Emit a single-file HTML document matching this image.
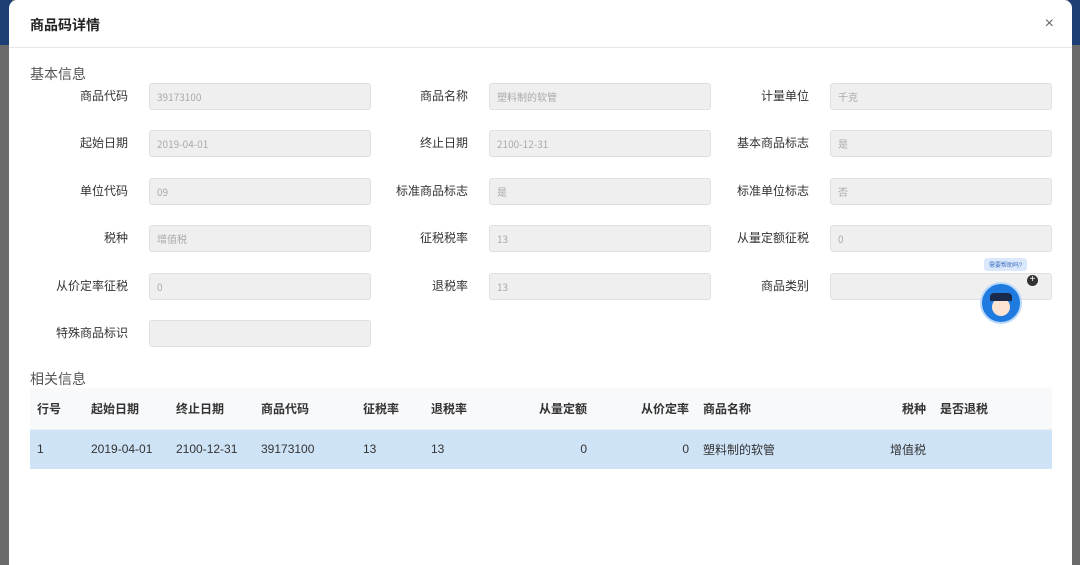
<!DOCTYPE html>
<html><head><meta charset="utf-8"><style>
*{margin:0;padding:0;box-sizing:border-box}
body{width:1080px;height:565px;overflow:hidden;background:#6b6b6b;font-family:"Liberation Sans","Noto Sans CJK SC",sans-serif;position:relative}
.lb{position:absolute;left:0;top:0;width:12px;height:45px;background:#1d3f73}
.rb{position:absolute;right:0;top:0;width:12px;height:45px;background:#1d3f73}
.modal{position:absolute;left:9px;top:0;width:1063px;height:565px;background:#fff;border-radius:8px 8px 0 0}
.hd{height:48px;border-bottom:1px solid #e6e6e6;position:relative}
.hd span{position:absolute;left:21px;top:15px;font-size:14px;color:#222;font-weight:bold}
.x{position:absolute;right:18px;top:15px;font-size:16px;color:#666}
.sec{position:absolute;font-size:14px;color:#555;left:21px}
.lab{position:absolute;font-size:12px;color:#333;text-align:right;width:120px;line-height:27px}
.in{position:absolute;width:222px;height:27px;background:#efefef;border:1px solid #e0e0e0;border-radius:3px;font-size:10px;color:#aaa;padding-left:7px;line-height:25px;font-family:"Noto Sans CJK SC",sans-serif}
table{position:absolute;left:21px;top:388px;width:1022px;border-collapse:collapse;font-size:12px;color:#333}
th{height:41px;background:#f8f9fb;font-weight:bold;text-align:left;border-bottom:1px solid #eee}
td{height:40px;background:#cfe3f7}
th,td{padding:0 0 0 7px}
.r{text-align:right;padding-right:7px}
</style></head><body>
<div class="lb"></div><div class="rb"></div>
<div class="modal">
<div class="hd"><span>商品码详情</span><div class="x">×</div></div>
<div class="sec" style="top:64px">基本信息</div>
<div class="sec" style="top:369px">相关信息</div>
<div id="f"></div>
<table>
<tr><th style="width:54px">行号</th><th style="width:85px">起始日期</th><th style="width:85px">终止日期</th><th style="width:102px">商品代码</th><th style="width:68px">征税率</th><th style="width:70px">退税率</th><th class="r" style="width:100px">从量定额</th><th class="r" style="width:102px">从价定率</th><th style="width:157px">商品名称</th><th class="r" style="width:80px">税种</th><th>是否退税</th></tr>
<tr><td>1</td><td>2019-04-01</td><td>2100-12-31</td><td>39173100</td><td>13</td><td>13</td><td class="r">0</td><td class="r">0</td><td>塑料制的软管</td><td class="r">增值税</td><td></td></tr>
</table>
<div style="position:absolute;left:975px;top:258px;background:#dbe8fb;color:#3a6fc0;font-size:6px;padding:2px 5px;border-radius:3px">需要帮助吗?</div>
<div style="position:absolute;left:1018px;top:275px;width:11px;height:11px;border-radius:50%;background:#333;color:#fff;font-size:10px;line-height:10px;text-align:center">+</div>
<div style="position:absolute;left:971px;top:282px;width:42px;height:42px;border-radius:50%;background:#1f7be0;border:2px solid #bcd9fb"><div style="position:absolute;left:10px;top:14px;width:18px;height:18px;border-radius:50%;background:#fde3d2"></div><div style="position:absolute;left:8px;top:9px;width:22px;height:8px;background:#1b2a4a;border-radius:4px 4px 0 0"></div></div>
</div>
<script>
var rows=[["商品代码","39173100","商品名称","塑料制的软管","计量单位","千克"],["起始日期","2019-04-01","终止日期","2100-12-31","基本商品标志","是"],["单位代码","09","标准商品标志","是","标准单位标志","否"],["税种","增值税","征税税率","13","从量定额征税","0"],["从价定率征税","0","退税率","13","商品类别",""],["特殊商品标识","",null]];
var ys=[83,130,178,225,273,320],xs=[140,480,821],h="";
rows.forEach(function(r,i){for(var c=0;c<3;c++){if(r[c*2]==null)break;h+='<div class="lab" style="left:'+(xs[c]-21-120)+'px;top:'+ys[i]+'px">'+r[c*2]+'</div><div class="in" style="left:'+xs[c]+'px;top:'+ys[i]+'px">'+r[c*2+1]+'</div>';}});
document.getElementById("f").innerHTML=h;
</script>
</body></html>
